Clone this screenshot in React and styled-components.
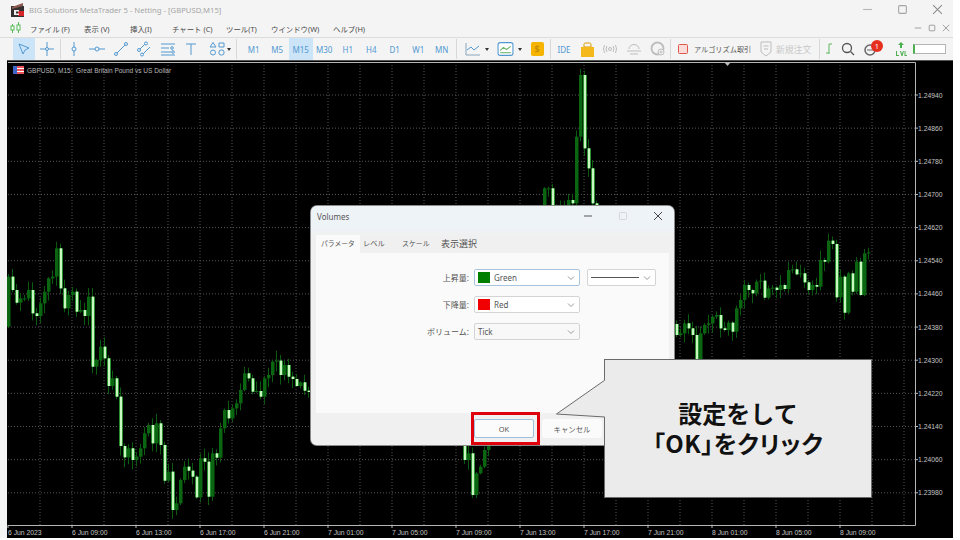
import React from "react";
import styled, { createGlobalStyle } from "styled-components";

const UI_FONT = `"Noto Sans", "Noto Sans CJK JP", sans-serif`;

const GlobalStyle = createGlobalStyle`
  html, body {
    margin: 0;
    background: #fff;
  }
  #root {
    width: 960px;
    height: 540px;
    overflow: hidden;
  }
`;

const Shell = styled.div`
  width: 953px;
  height: 540px;
  display: flex;
  flex-direction: column;
  background: #f4f4f4;
  font-family: ${UI_FONT};
  border-bottom: 2px solid #fff;
  box-sizing: border-box;
`;

const TitleBar = styled.header`
  height: 19px;
  display: flex;
  align-items: center;
  padding-left: 11px;
  color: #a6a6a6;
  font-size: 7.7px;
`;

const TitleText = styled.span`
  margin-left: 4px;
  flex: 1;
`;

const WindowButtons = styled.div`
  display: flex;
  align-items: center;
  padding-right: ${({ $small }) => ($small ? "3px" : "10px")};
  gap: ${({ $small }) => ($small ? "6px" : "24px")};
`;

const MenuBar = styled.nav`
  height: 18px;
  display: flex;
  align-items: center;
  padding-left: 10px;
`;

const MenuList = styled.div`
  display: flex;
  flex: 1;
  margin-left: 9px;
  color: #4a4a4a;
  font-size: 7.4px;
`;

const MenuItem = styled.span`
  width: ${({ $w }) => $w}px;
  white-space: nowrap;
`;

const ToolBar = styled.div`
  height: 23px;
  display: flex;
  align-items: center;
  padding-left: 13px;
  border-top: 1px solid #dcdcdc;
  box-sizing: border-box;
`;

const ToolButton = styled.div`
  width: ${({ $w }) => $w || 23.5}px;
  height: 22px;
  flex: none;
  margin-left: ${({ $ml }) => $ml || 0}px;
  display: flex;
  align-items: center;
  justify-content: center;
  background: ${({ $on }) => ($on ? "#cce4f7" : "transparent")};
  color: ${({ $muted }) => ($muted ? "#bdbdbd" : "#5299d2")};
  font-size: 8px;
  position: relative;
`;

const Caret = styled.span`
  width: 0;
  height: 0;
  flex: none;
  margin-left: ${({ $l }) => $l}px;
  margin-right: ${({ $r }) => $r}px;
  border-left: 2.5px solid transparent;
  border-right: 2.5px solid transparent;
  border-top: 3px solid #333;
`;

const Sep = styled.span`
  width: 1px;
  height: 20px;
  flex: none;
  margin: 0 ${({ $m }) => $m ?? 1}px;
  background: #d8d8d8;
`;

const ToolLabel = styled.span`
  flex: none;
  width: ${({ $w }) => $w}px;
  font-size: ${({ $size }) => $size}px;
  white-space: nowrap;
  color: ${({ $muted }) => ($muted ? "#c8c8c8" : "#555")};
`;

const CoinMark = styled.span`
  width: 13px;
  height: 14px;
  border-radius: 2px;
  background: #f4b400;
  color: #b87f00;
  font-size: 9px;
  line-height: 14px;
  text-align: center;
`;

const Badge = styled.span`
  position: absolute;
  top: 2px;
  left: 13px;
  width: 12px;
  height: 12px;
  border-radius: 50%;
  background: #e5301f;
  color: #fff;
  font-size: 7.5px;
  line-height: 12px;
  text-align: center;
`;

const LevelBar = styled.div`
  width: 33px;
  height: 10px;
  flex: none;
  margin-left: 2px;
  background: #fff;
  border: 1px solid #b5b5b5;
  border-left: 2px solid #4caf50;
  box-sizing: border-box;
`;

const ChartPanel = styled.main`
  position: relative;
  flex: 1;
  margin-left: 7px;
  background: #000;
  border-top: 1px solid #555;
  overflow: hidden;
`;

const ChartSvg = styled.svg`
  display: block;
  width: 946px;
  height: 477px;
`;

const AxisText = styled.text`
  font-family: "Liberation Sans", sans-serif;
  font-size: 6.8px;
  fill: #c4c4c4;
`;

const ChartLegend = styled.div`
  position: absolute;
  top: 5px;
  left: 6px;
  display: flex;
  align-items: center;
  gap: 3px;
  color: #b8b8b8;
  font-family: "Liberation Sans", sans-serif;
  font-size: 6.5px;
  white-space: pre;
`;

const Dialog = styled.section`
  position: absolute;
  left: 304px;
  top: 145px;
  width: 363px;
  height: 239px;
  display: flex;
  flex-direction: column;
  border-radius: 6px;
  overflow: hidden;
  background: #f0f0f0;
  box-shadow: 0 0 0 1px #8b8b8b;
`;

const DialogHead = styled.div`
  height: 29px;
  flex: none;
  display: flex;
  align-items: center;
  box-sizing: border-box;
  padding: 0 11px 9px 6px;
  background: linear-gradient(#eef3f8 75%, #f0f0f0);
  color: #555;
  font-size: 8px;
`;

const DialogTitle = styled.span`
  flex: 1;
`;

const DialogControls = styled.div`
  display: flex;
  align-items: center;
  gap: 25px;
`;

const Tabs = styled.div`
  height: 18px;
  flex: none;
  display: flex;
  padding-left: 5px;
  background: #f0f0f0;
`;

const Tab = styled.div`
  width: ${({ $w }) => $w}px;
  padding-left: ${({ $on }) => ($on ? 5 : 3)}px;
  box-sizing: border-box;
  line-height: 17px;
  font-size: ${({ $size }) => $size || 7.2}px;
  white-space: nowrap;
  color: #555;
  background: ${({ $on }) => ($on ? "#fafafa" : "transparent")};
`;

const DialogBody = styled.div`
  flex: 1;
  display: flex;
  flex-direction: column;
  gap: 10px;
  margin: 0 5px;
  padding-top: 16px;
  background: #fafafa;
`;

const FormRow = styled.div`
  display: flex;
  align-items: center;
  height: 17px;
`;

const FormLabel = styled.label`
  width: 153px;
  text-align: right;
  font-size: 8px;
  color: #555;
  margin-right: 5px;
`;

const Select = styled.div`
  width: ${({ $w }) => $w || 106}px;
  height: 17px;
  box-sizing: border-box;
  margin-right: 7px;
  padding: 0 4px 0 3px;
  display: flex;
  align-items: center;
  gap: 4px;
  background: ${({ $plain }) => ($plain ? "#f8f8f8" : "#fff")};
  border: 1px solid ${({ $focus }) => ($focus ? "#a9c5dd" : "#d4d4d4")};
  border-radius: 2px;
  color: #555;
  font-size: 8px;
`;

const Swatch = styled.span`
  width: 12px;
  height: 11px;
  flex: none;
  background: ${({ $color }) => $color};
`;

const SelectValue = styled.span`
  flex: 1;
`;

const LineSample = styled.span`
  flex: 1;
  height: 1px;
  background: #555;
`;

const DialogFoot = styled.div`
  height: 31px;
  flex: none;
  display: flex;
  align-items: center;
  padding: 0 0 1px 163px;
  gap: 8px;
  background: #f0f0f0;
`;

const FootButton = styled.div`
  width: 60px;
  height: 19px;
  line-height: 18px;
  box-sizing: border-box;
  text-align: center;
  font-size: 7.4px;
  color: #555;
  background: #fbfbfb;
  border-radius: 2px;
  border: 1px solid ${({ $primary }) => ($primary ? "#9fc0dc" : "#fbfbfb")};
`;

const RedFrame = styled.div`
  position: absolute;
  left: 464px;
  top: 351px;
  width: 69px;
  height: 33px;
  box-sizing: border-box;
  border: 3px solid #e0000c;
`;

const Callout = styled.aside`
  position: absolute;
  left: 597px;
  top: 298px;
  width: 268px;
  height: 139px;
  box-sizing: border-box;
  display: flex;
  flex-direction: column;
  align-items: center;
  justify-content: center;
  background: #ebebeb;
  border: 1px solid #6a6a6a;
  color: #111;
  font-family: "Noto Sans CJK JP", sans-serif;
  font-size: 24px;
  font-weight: 700;
  line-height: 30px;
  padding-bottom: 2px;
`;

const CalloutTail = styled.svg`
  position: absolute;
  left: -50px;
  top: 20px;
`;

const CalloutLine = styled.div`
  white-space: nowrap;
  font-feature-settings: ${({ $tight }) => ($tight ? '"palt"' : "normal")};
  letter-spacing: ${({ $tight }) => ($tight ? "0.5px" : "0")};
`;

// candle closes, read off the chart: y = base + value / 3, one candle each 4px
const SEGMENTS = [
  {
    x0: 8, base: 230, open: 290,
    closes: [140, 180, 218, 205, 205, 180, 250, 258, 220, 185, 145, 140, 55, 175, 235, 195, 185, 245, 240, 258, 200, 410, 390, 350, 385, 468, 445, 500, 648, 682, 655, 690, 680, 655, 610, 585, 640, 580, 645, 752, 725, 840, 820, 750, 710, 722, 740, 802, 685, 695, 800, 670, 683, 595, 540, 565, 535, 520, 480, 430, 445, 485, 483, 500, 445, 435, 395, 392, 435, 405, 440, 447, 468, 457, 482, 486],
  },
  {
    x0: 544, base: 60, open: 445,
    closes: [385, 385, 445, 450, 455, 440, 420, 430, 230, 45, 265, 325, 430, 445],
  },
  {
    x0: 676, base: 220, open: 312,
    closes: [345, 340, 310, 325, 345, 420, 340, 315, 310, 290, 285, 325, 330, 308, 335, 265, 240, 195, 210, 220, 185, 182, 233, 205, 203, 210, 195, 207, 150, 148, 163, 160, 187, 210, 195, 200, 120, 125, 62, 72, 232, 170, 278, 160, 215, 125, 225, 100, 97],
  },
  {
    x0: 464, base: 440, open: -30,
    closes: [60, 40, 165, 100, 80, 30, -10, -30],
  },
];

const wick = (i, salt) => {
  const n = Math.sin(i * 12.9898 + salt * 78.233) * 43758.5453;
  return 1 + (n - Math.floor(n)) * 9;
};

const candles = SEGMENTS.flatMap((seg, s) => {
  let prev = seg.open;
  return seg.closes.map((close, i) => {
    const open = prev;
    prev = close;
    const top = seg.base + Math.min(open, close) / 3;
    const bottom = seg.base + Math.max(open, close) / 3;
    return {
      id: `${s}-${i}`,
      x: seg.x0 + i * 4,
      top,
      height: Math.max(bottom - top, 1),
      high: top - wick(i, s + 1),
      low: bottom + wick(i, s + 5),
      falling: close > open,
    };
  });
});

const PRICES = ["1.24940", "1.24860", "1.24780", "1.24700", "1.24620", "1.24540", "1.24460", "1.24380", "1.24300", "1.24220", "1.24140", "1.24060", "1.23980"];
const TIMES = ["6 Jun 2023", "6 Jun 09:00", "6 Jun 13:00", "6 Jun 17:00", "6 Jun 21:00", "7 Jun 01:00", "7 Jun 05:00", "7 Jun 09:00", "7 Jun 13:00", "7 Jun 17:00", "7 Jun 21:00", "8 Jun 01:00", "8 Jun 05:00", "8 Jun 09:00"];
const GRID_X = Array.from({ length: 28 }, (_, i) => 40 + i * 32);

const Candle = ({ c }) => (
  <g>
    <line x1={c.x + 0.5} x2={c.x + 0.5} y1={c.high} y2={c.low} stroke="#0a5a10" strokeWidth="1" />
    {c.falling ? (
      <>
        <rect x={c.x - 1} y={c.top} width="4" height={c.height} fill="#2a8f30" />
        <rect x={c.x} y={c.top} width="2" height={c.height} fill="#c8f8c0" />
      </>
    ) : (
      <rect x={c.x - 1} y={c.top} width="3.5" height={c.height} fill="#0a6610" />
    )}
  </g>
);

const Chart = () => (
  <ChartSvg viewBox="7 61 946 477">
    {GRID_X.map((x) => (
      <line key={x} x1={x} x2={x} y1="62" y2="525" stroke="#555" strokeWidth="1" strokeDasharray="1 2" />
    ))}
    {PRICES.map((p, i) => {
      const y = 95 + i * 33.15;
      return (
        <g key={p}>
          <line x1="8" x2="915" y1={y} y2={y} stroke="#555" strokeWidth="1" strokeDasharray="1 2" />
          <line x1="915" x2="918" y1={y} y2={y} stroke="#bbb" />
          <AxisText x="918" y={y + 2.5}>{p}</AxisText>
        </g>
      );
    })}
    {candles.map((c) => (
      <Candle key={c.id} c={c} />
    ))}
    <path d="M8 62.500H915.500V525.500H8" fill="none" stroke="#b5b5b5" strokeWidth="1" />
    <path d="M724 62h7l-3.500 4z" fill="#bbb" />
    {TIMES.map((t, i) => (
      <g key={t}>
        <line x1={8 + i * 64} x2={8 + i * 64} y1="525" y2="528" stroke="#bbb" />
        <AxisText x={8 + i * 64} y="534.5">{t}</AxisText>
      </g>
    ))}
  </ChartSvg>
);

const FlagIcon = () => (
  <svg width="11" height="8" viewBox="0 0 11 8">
    <rect width="11" height="8" fill="#e8505a" />
    <rect y="2" width="11" height="1" fill="#fff" />
    <rect y="5" width="11" height="1" fill="#fff" />
    <rect width="4" height="8" fill="#3d64c8" />
  </svg>
);

const AppLogo = () => (
  <svg width="14" height="14" viewBox="0 0 14 14">
    <rect y="3" width="13" height="11" fill="#33302f" />
    <path d="M1 4 12 0v3L1 6z" fill="#8d5a50" />
    <path d="M7 8h6v5H7z" fill="#d5242a" />
    <path d="M3 7h5v1.500H5v2h3V12H3z" fill="#eee" />
  </svg>
);

const MenuLogo = () => (
  <svg width="11" height="12" viewBox="0 0 11 12" fill="none" stroke="#57b857">
    <path d="M2.500 2v9M8.500 0v11" />
    <rect x="1" y="4" width="3" height="4" fill="#fff" />
    <rect x="7" y="3" width="3" height="5" fill="#fff" />
  </svg>
);

const Stroke = ({ children, w = 16, h = 16, color = "currentColor", sw = 1 }) => (
  <svg width={w} height={h} viewBox="0 0 16 16" fill="none" stroke={color} strokeWidth={sw}>
    {children}
  </svg>
);

const WinGlyph = ({ kind, size = 10, color = "#8d8d8d" }) => (
  <svg width={size} height={size} viewBox="0 0 10 10" fill="none" stroke={color} strokeWidth="1">
    {kind === "min" && <path d="M1 5h8" />}
    {kind === "max" && <rect x="1.500" y="1.500" width="7" height="7" rx="1" />}
    {kind === "close" && <path d="M1 1l8 8M9 1l-8 8" />}
  </svg>
);

const TIMEFRAMES = ["M1", "M5", "M15", "M30", "H1", "H4", "D1", "W1", "MN"];
const MENUS = [
  ["ファイル (F)", 54],
  ["表示 (V)", 46],
  ["挿入(I)", 42],
  ["チャート (C)", 54],
  ["ツール(T)", 45],
  ["ウインドウ(W)", 62],
  ["ヘルプ(H)", 40],
];

const Toolbar = () => (
  <ToolBar>
    <ToolButton $on $w={22}>
      <Stroke><path d="M3 3l10 4-4 2-2 4z" /></Stroke>
    </ToolButton>
    <ToolButton $w={24}>
      <Stroke><path d="M8 1v14M1 8h14" /><circle cx="8" cy="8" r="1.500" fill="#f4f4f4" /></Stroke>
    </ToolButton>
    <Sep />
    <ToolButton>
      <Stroke><path d="M8 1v14" /><circle cx="8" cy="8" r="2" fill="#f4f4f4" /></Stroke>
    </ToolButton>
    <ToolButton>
      <Stroke><path d="M0 8h16" /><circle cx="8" cy="8" r="2" fill="#f4f4f4" /></Stroke>
    </ToolButton>
    <ToolButton>
      <Stroke><path d="M3 13 13 3" /><circle cx="3" cy="13" r="1.500" fill="#f4f4f4" /><circle cx="13" cy="3" r="1.500" fill="#f4f4f4" /></Stroke>
    </ToolButton>
    <ToolButton>
      <Stroke><path d="M2 10 10 2M6 14l8-8" /><circle cx="3" cy="9" r="1.500" fill="#f4f4f4" /><circle cx="10" cy="2.500" r="1.500" fill="#f4f4f4" /><circle cx="6" cy="13.500" r="1.500" fill="#f4f4f4" /></Stroke>
    </ToolButton>
    <ToolButton>
      <Stroke><path d="M1 3h14M1 7h8M1 11h10M1 14h14" /><circle cx="12" cy="7" r="1.300" /><circle cx="13" cy="11" r="1.300" /></Stroke>
    </ToolButton>
    <ToolButton>
      <Stroke><path d="M3 3h10M8 3v11" /></Stroke>
    </ToolButton>
    <ToolButton $w={28}>
      <Stroke><path d="M4 1.500 7 6H1zM10 2h5v4h-5z" /><circle cx="4" cy="11.500" r="2.500" /><rect x="10" y="9" width="5" height="5" rx="2" /></Stroke>
    </ToolButton>
    <Caret $l={-4} $r={0} />
    <Sep $m={5} />
    {TIMEFRAMES.map((t) => (
      <ToolButton key={t} $on={t === "M15"}>{t}</ToolButton>
    ))}
    <Sep $m={2} />
    <ToolButton $w={29}>
      <Stroke color="#8aa6bc"><path d="M1 2v12h14" /><path d="M2 9l4-3 3 3 5-4" stroke="#5299d2" /></Stroke>
    </ToolButton>
    <Caret $l={-3} $r={6.5} />
    <ToolButton $w={20}>
      <Stroke w={17} h={17}><rect x="1" y="1.500" width="14" height="12" rx="2" fill="#fff" /><path d="M3 9l3-3 3 2 4-3" stroke="#6db56d" /><path d="M3 11h10" stroke="#6db56d" /></Stroke>
    </ToolButton>
    <Caret $l={2.5} $r={6.5} />
    <ToolButton $w={18}>
      <CoinMark>$</CoinMark>
    </ToolButton>
    <Sep $m={3.5} />
    <ToolButton $w={20}>IDE</ToolButton>
    <ToolButton $w={26}>
      <svg width="13" height="15" viewBox="0 0 13 15">
        <path d="M3 5V2.500Q3 1 4.500 1h4Q10 1 10 2.500V5z" fill="none" stroke="#d99b00" />
        <rect y="5" width="13" height="10" fill="#f5b81c" />
      </svg>
    </ToolButton>
    <ToolButton $w={20} $muted>
      <Stroke><circle cx="8" cy="8" r="1.500" /><path d="M5 5Q3 8 5 11M11 5q2 3 0 6M2.500 4Q.5 8 2.500 12M13.500 4q2 4 0 8" /></Stroke>
    </ToolButton>
    <ToolButton $w={28} $muted>
      <Stroke><path d="M3 8a5 4.500 0 0 1 10 0M1 10h14M4 13h8" /></Stroke>
    </ToolButton>
    <ToolButton $w={20} $muted>
      <Stroke><circle cx="7.500" cy="7.500" r="6" strokeWidth="1.800" /><circle cx="11" cy="11" r="3" fill="#f4f4f4" /><path d="M9.500 11h3M11 9.500v3" /></Stroke>
    </ToolButton>
    <Sep $m={1.5} />
    <ToolButton $w={22}>
      <svg width="10" height="10" viewBox="0 0 10 10">
        <rect x="0.500" y="0.500" width="9" height="9" rx="1" fill="#fbdcd8" stroke="#e0564a" />
      </svg>
    </ToolButton>
    <ToolLabel $w={62} $size={7.2}>アルゴリズム取引</ToolLabel>
    <ToolButton $w={20} $muted>
      <Stroke><path d="M3 1h10v10l-5 4-5-4zM5.500 5h5M6 8h4" /></Stroke>
    </ToolButton>
    <ToolLabel $w={42} $size={8.8} $muted>新規注文</ToolLabel>
    <Sep $m={0.5} />
    <ToolButton $w={18}>
      <svg width="8" height="12" viewBox="0 0 8 12" fill="none" stroke="#5cb85c"><path d="M4 1v10M4 1h3M1 10h3" /></svg>
    </ToolButton>
    <ToolButton $w={20}>
      <Stroke color="#555" sw={1.300}><circle cx="7" cy="7" r="4.500" /><path d="M10.500 10.500 14 14" /></Stroke>
    </ToolButton>
    <ToolButton $w={24}>
      <Stroke color="#666"><circle cx="8" cy="9" r="5" strokeWidth="1.500" /><path d="M5 9h6" /></Stroke>
      <Badge>1</Badge>
    </ToolButton>
    <ToolButton $w={20} $ml={9}>
      <svg width="12" height="15" viewBox="0 0 12 15" fill="#4caf50">
        <path d="M6 0l3 3H7v3H5V3H3z" />
        <path d="M1 9h1v4h2v1H1zM5 9h1l1 3 1-3h1l-1.500 5h-1zM9.500 9h1v4h1.500v1H9.500z" />
      </svg>
    </ToolButton>
    <LevelBar />
  </ToolBar>
);

const SmallChevron = ({ color = "#999" }) => (
  <svg width="8" height="6" viewBox="0 0 8 6" fill="none" stroke={color}>
    <path d="M1 1.500 4 4.500 7 1.500" />
  </svg>
);

const VolumesDialog = () => (
  <Dialog>
    <DialogHead>
      <DialogTitle>Volumes</DialogTitle>
      <DialogControls>
        <WinGlyph kind="min" color="#555" />
        <WinGlyph kind="max" color="#d5d5d5" />
        <WinGlyph kind="close" color="#444" />
      </DialogControls>
    </DialogHead>
    <Tabs>
      <Tab $on $w={44} $size={6.8}>パラメータ</Tab>
      <Tab $w={39}>レベル</Tab>
      <Tab $w={39} $size={6.9}>スケール</Tab>
      <Tab $w={50} $size={9}>表示選択</Tab>
    </Tabs>
    <DialogBody>
      <FormRow>
        <FormLabel>上昇量:</FormLabel>
        <Select $focus>
          <Swatch $color="#007f00" />
          <SelectValue>Green</SelectValue>
          <SmallChevron />
        </Select>
        <Select $w={69}>
          <LineSample />
          <SmallChevron />
        </Select>
      </FormRow>
      <FormRow>
        <FormLabel>下降量:</FormLabel>
        <Select>
          <Swatch $color="#f00000" />
          <SelectValue>Red</SelectValue>
          <SmallChevron />
        </Select>
      </FormRow>
      <FormRow>
        <FormLabel>ボリューム:</FormLabel>
        <Select $plain>
          <SelectValue>Tick</SelectValue>
          <SmallChevron />
        </Select>
      </FormRow>
    </DialogBody>
    <DialogFoot>
      <FootButton $primary>OK</FootButton>
      <FootButton>キャンセル</FootButton>
    </DialogFoot>
  </Dialog>
);

const App = () => (
  <>
    <GlobalStyle />
    <Shell>
      <TitleBar>
        <AppLogo />
        <TitleText>BIG Solutions MetaTrader 5 - Netting - [GBPUSD,M15]</TitleText>
        <WindowButtons>
          <WinGlyph kind="min" size={11} color="#b5b5b5" />
          <WinGlyph kind="max" size={11} color="#a5a5a5" />
          <WinGlyph kind="close" size={11} color="#8d8d8d" />
        </WindowButtons>
      </TitleBar>
      <MenuBar>
        <MenuLogo />
        <MenuList>
          {MENUS.map(([label, w]) => (
            <MenuItem key={label} $w={w}>{label}</MenuItem>
          ))}
        </MenuList>
        <WindowButtons $small>
          <WinGlyph kind="min" size={8} />
          <WinGlyph kind="max" size={8} />
          <WinGlyph kind="close" size={8} />
        </WindowButtons>
      </MenuBar>
      <Toolbar />
      <ChartPanel>
        <Chart />
        <ChartLegend>
          <FlagIcon />
          <span>GBPUSD, M15:  Great Britain Pound vs US Dollar</span>
        </ChartLegend>
        <VolumesDialog />
        <RedFrame />
        <Callout>
          <CalloutTail width="51" height="40" viewBox="0 0 51 40">
            <path d="M50 0 1.500 34 50 37" fill="#ebebeb" stroke="#6a6a6a" />
            <rect x="49.500" y="0.500" width="2" height="36" fill="#ebebeb" />
          </CalloutTail>
          <CalloutLine>設定をして</CalloutLine>
          <CalloutLine $tight>「OK」をクリック</CalloutLine>
        </Callout>
      </ChartPanel>
    </Shell>
  </>
);

export default App;
